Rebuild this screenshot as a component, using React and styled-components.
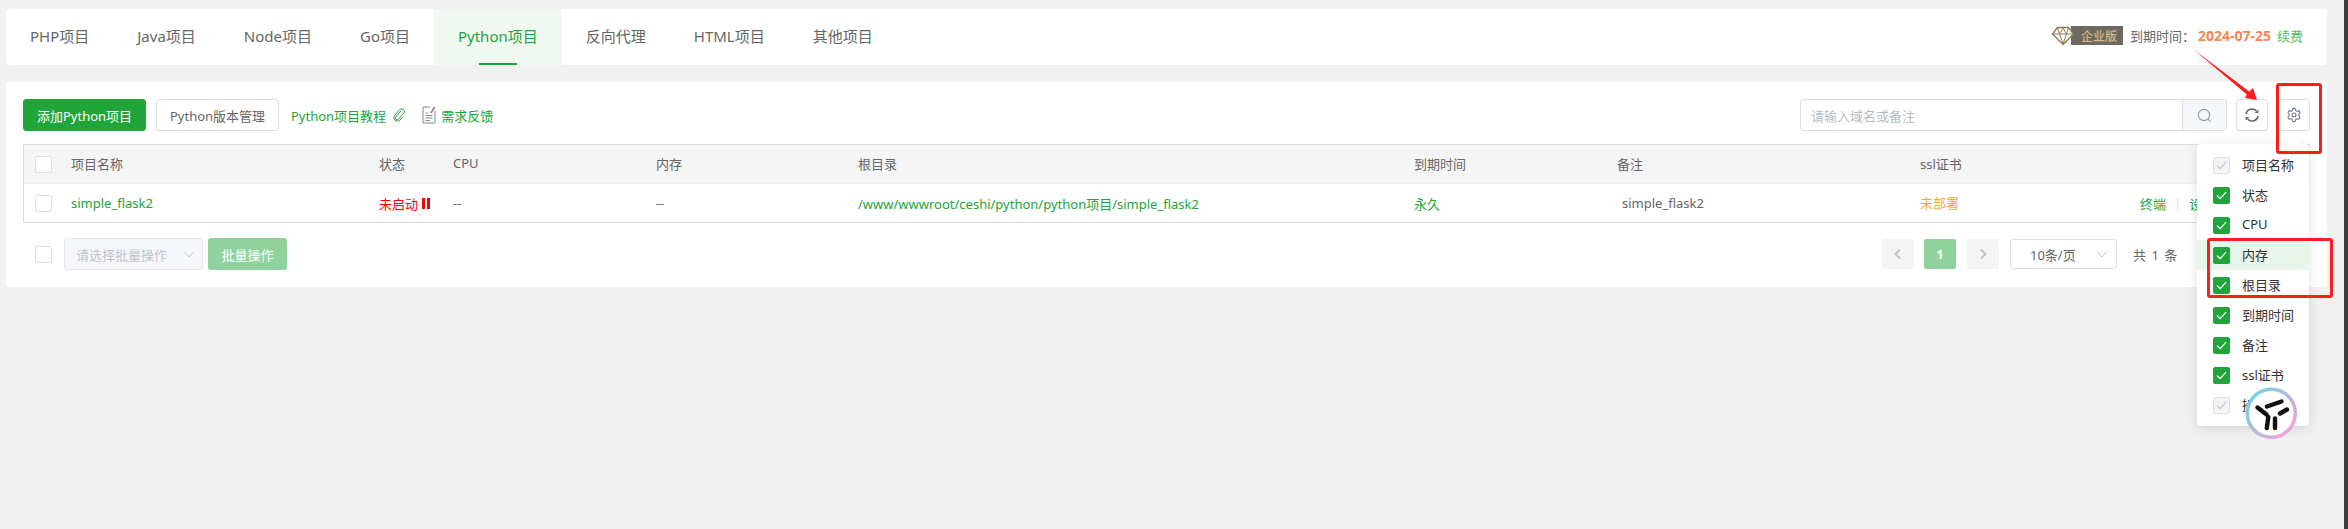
import React from 'react';
import styled, { createGlobalStyle } from 'styled-components';
import { Settings } from 'lucide-react';

const Global = createGlobalStyle`
  html, body { margin: 0; padding: 0; background: #f1f1f1; }
  body { font-family: "Noto Sans", "Noto Sans CJK SC", sans-serif; font-size: 13px; color: #666; overflow: hidden; }
  * { box-sizing: border-box; }
`;

const GREEN = '#20a53a';

const Page = styled.div`
  position: relative; display: flex; width: 2348px; height: 529px; overflow: hidden; background: #f1f1f1;
`;
const Content = styled.main`
  flex: 1; min-width: 0; display: flex; flex-direction: column; gap: 17px; padding: 9px 17px 0 6px;
`;
const Strip = styled.div`
  width: 4px; background: #3c3c3c;
`;
const TabsCard = styled.nav`
  display: flex; align-items: stretch; height: 56px; background: #fff; border-radius: 4px; padding-right: 24px;
`;
const Tab = styled.div`
  position: relative; display: flex; align-items: center; padding: 0 24px 4px; font-size: 15px;
  color: ${p => (p.$active ? GREEN : '#666')};
  background: ${p => (p.$active ? '#f0f8f2' : 'transparent')};
  ${p => p.$active && `&::after { content: ''; position: absolute; left: 45px; width: 38px; bottom: 0; height: 2px; background: ${GREEN}; }`}
`;
const Spacer = styled.div`flex: 1;`;
const VipInfo = styled.div`
  display: flex; align-items: center; font-size: 13px; color: #666; padding-bottom: 3px;
`;
const Badge = styled.span`
  display: flex; align-items: center; justify-content: center; height: 19px; width: 52px; margin-left: -4px; padding-left: 4px;
  background: #6c6963; color: #d6b57e; font-size: 12px; font-weight: 500;
`;
const Expire = styled.span`margin-left: 7px; width: 68px; white-space: nowrap;`;
const DateText = styled.span`color: #fc8453; font-weight: 700; font-size: 14px;`;
const Renew = styled.span`color: #52bd65; margin-left: 6px; font-size: 13px;`;

const MainCard = styled.section`
  height: 205px; background: #fff; border-radius: 2px; padding: 17px 17px 0 17px; display: flex; flex-direction: column;
`;
const Toolbar = styled.div`
  display: flex; align-items: center; height: 32px;
`;
const Btn = styled.button`
  height: 32px; width: ${p => p.$w}px; padding: 0; font: inherit; font-size: 13px; border-radius: 3px; white-space: nowrap; cursor: pointer;
  border: 1px solid ${p => (p.$primary ? GREEN : '#dcdfe6')};
  background: ${p => (p.$primary ? GREEN : '#fff')};
  color: ${p => (p.$primary ? '#fff' : '#666')};
  margin-right: ${p => p.$mr || 0}px;
`;
const Link = styled.span`
  display: inline-flex; align-items: center; color: ${GREEN}; white-space: nowrap; gap: ${p => p.$gap || 0}px; margin-right: ${p => p.$mr || 0}px;
`;
const Search = styled.div`
  display: flex; width: 427px; height: 32px; border: 1px solid #dcdfe6; border-radius: 3px; overflow: hidden; margin-right: 9px;
`;
const SearchInput = styled.div`
  flex: 1; display: flex; align-items: center; padding-left: 10px; color: #b8bcc4; font-size: 13px;
`;
const SearchAddon = styled.div`
  width: 44px; display: flex; align-items: center; justify-content: center; background: #f5f7fa; border-left: 1px solid #dcdfe6;
`;
const IconBtn = styled.div`
  width: 32px; height: 32px; display: flex; align-items: center; justify-content: center;
  border: 1px solid #dcdfe6; border-radius: 3px; background: #fff; margin-left: ${p => p.$ml || 0}px;
`;
const Table = styled.div`
  margin-top: 13px; border: 1px solid #dcdcdc; border-width: 1px 0 1px 1px; height: 79px;
`;
const columns = '47px 308px 74px 203px 202px 556px 203px 303px 220px 1fr';
const HeadRow = styled.div`
  display: grid; grid-template-columns: ${columns}; align-items: center; height: 39px; background: #f5f5f6; border-bottom: 1px solid #eceef3; color: #666;
`;
const BodyRow = styled.div`
  display: grid; grid-template-columns: ${columns}; align-items: center; height: 38px;
`;
const Cell = styled.div`
  white-space: nowrap; color: ${p => p.$color || '#666'}; padding-left: ${p => p.$pl || 0}px; padding-bottom: ${p => p.$pb || 0}px;
  display: flex; align-items: center;
`;
const CheckCell = styled.div`padding-left: 11px; display: flex;`;
const Box = styled.span`
  width: 17px; height: 17px; border-radius: 2px; display: inline-flex; align-items: center; justify-content: center; flex: none;
  border: 1px solid ${p => (p.$on ? GREEN : '#dcdfe6')};
  background: ${p => (p.$on ? GREEN : p.$dis ? '#f2f3f8' : '#fff')};
`;
const Pause = styled.span`
  display: inline-flex; gap: 2px; margin-left: 4px;
  i { display: block; width: 3px; height: 11px; background: #f00; }
`;
const Sep = styled.span`color: #ddd; margin: 0 8px;`;
const Actions = styled.span`display: flex; align-items: center; color: ${GREEN};`;

const Footer = styled.div`
  margin-top: 15px; display: flex; align-items: center; height: 32px;
`;
const FootCheck = styled.div`padding-left: 12px; width: 41px; display: flex;`;
const BatchSelect = styled.div`
  width: 139px; height: 32px; display: flex; align-items: center; justify-content: space-between; padding: 0 7px 0 11px;
  border: 1px solid #e4e7ed; border-radius: 3px; background: #f5f7fa; color: #c0c4cc; white-space: nowrap;
`;
const BatchBtn = styled.div`
  margin-left: 5px; width: 79px; height: 32px; display: flex; align-items: center; justify-content: center;
  background: #90d29d; color: #fff; border-radius: 3px;
`;
const Pager = styled.div`
  display: flex; align-items: center; margin-left: auto; height: 30px;
`;
const PageBtn = styled.div`
  width: 32px; height: 30px; display: flex; align-items: center; justify-content: center; border-radius: 2px; margin-right: ${p => p.$mr || 0}px;
  background: ${p => (p.$active ? '#90d29d' : '#f4f4f5')}; color: #fff; font-weight: 700;
`;
const SizeSelect = styled.div`
  width: 107px; height: 30px; display: flex; align-items: center; justify-content: space-between; padding: 0 8px 0 19px;
  border: 1px solid #dcdfe6; border-radius: 3px; color: #666; margin-right: 16px; white-space: nowrap;
`;
const Total = styled.span`width: 177px; white-space: nowrap; word-spacing: 2px; color: #666;`;

const Popover = styled.div`
  position: absolute; left: 2197px; top: 144px; width: 112px; height: 282px; padding: 6px 0; background: #fff; border-radius: 4px;
  box-shadow: 0 2px 12px rgba(0,0,0,.12);
  &::before {
    content: ''; position: absolute; right: 11px; top: -5px; width: 10px; height: 10px; background: #fff; transform: rotate(45deg);
  }
`;
const PopRow = styled.div`
  position: relative; height: 30px; display: flex; align-items: center; gap: 12px; padding-left: 16px; color: #333; font-size: 13px;
  background: ${p => (p.$hover ? '#e8f5ea' : 'transparent')};
`;
const PopLabel = styled.span`padding-bottom: 2px;`;
const MarkBox = styled.div`
  position: absolute; left: ${p => p.$x}px; top: ${p => p.$y}px; width: ${p => p.$w}px; height: ${p => p.$h}px;
  border: 3px solid #fb1e1e; border-radius: 3px; pointer-events: none;
`;
const Overlay = styled.svg`
  position: absolute; left: ${p => p.$x}px; top: ${p => p.$y}px; pointer-events: none; overflow: visible;
`;

const Tick = ({ color = '#fff' }) => (
  <svg width="11" height="9" viewBox="0 0 11 9"><path d="M1 4.5 L4.2 7.6 L10 1.2" fill="none" stroke={color} strokeWidth="1.2" /></svg>
);
const Chevron = ({ dir = 'down', color = '#c0c4cc', size = 12 }) => {
  const d = dir === 'down' ? 'M1.5 4 L6 9 L10.5 4' : dir === 'left' ? 'M8 1.5 L3.5 6 L8 10.5' : 'M4 1.5 L8.5 6 L4 10.5';
  return <svg width={size} height={size} viewBox="0 0 12 12"><path d={d} fill="none" stroke={color} strokeWidth={dir === 'down' ? 1 : 2} /></svg>;
};
const Diamond = () => (
  <svg width="24" height="20" viewBox="0 0 24 20" fill="none" stroke="#8f7a55" strokeWidth="1.4" style={{ position: 'relative', zIndex: 1 }}>
    <path d="M6.5 1.5 H17.5 L22.5 8 L12 18.5 L1.5 8 Z" fill="#fff" />
    <path d="M2 8 H22 M6.5 2 L8.5 8 L12 18 L15.5 8 L17.5 2 M8.5 8 L12 2 L15.5 8" strokeWidth="1" />
  </svg>
);
const LinkIcon = () => (
  <svg width="14" height="16" viewBox="0 0 14 16" fill="none" stroke={GREEN} strokeWidth="1">
    <path d="M9 4 L3.6 10 a1.8 1.8 0 0 0 2.6 2.4 L12 6 a2.7 2.7 0 0 0 -3.9 -3.6 L2.4 8.6 a3.6 3.6 0 0 0 5.2 4.8 L10.5 10" />
  </svg>
);
const DocIcon = () => (
  <svg width="14" height="20" viewBox="0 0 14 20" fill="none" stroke="#888" strokeWidth="1">
    <path d="M8 2 H1 V18 H13 V6" />
    <path d="M3.5 10.5 H10.5 M3.5 13 H10.5 M3.5 15.5 H8 M3.5 8 H6" />
    <path d="M8 8 L12 1.5 L13.5 2.5 L9.5 8.5 Z" fill="#888" stroke="none" />
  </svg>
);
const SearchIcon = () => (
  <svg width="15" height="15" viewBox="0 0 15 15" fill="none" stroke="#97a3b4" strokeWidth="1.2">
    <circle cx="7" cy="7" r="5.6" /><path d="M11 11 L13.6 13.6" />
  </svg>
);
const RefreshIcon = () => (
  <svg width="16" height="16" viewBox="0 0 16 16" fill="none" stroke="#666" strokeWidth="1.6">
    <path d="M2 7 A6 6 0 0 1 12.4 4" />
    <path d="M14 9 A6 6 0 0 1 3.6 12" />
    <path d="M14.4 2.4 V6 H10.8 Z M1.6 13.6 V10 H5.2 Z" fill="#666" stroke="none" />
  </svg>
);

const tabs = ['PHP项目', 'Java项目', 'Node项目', 'Go项目', 'Python项目', '反向代理', 'HTML项目', '其他项目'];
const headers = ['项目名称', '状态', 'CPU', '内存', '根目录', '到期时间', '备注', 'ssl证书', ''];
const popItems = [
  ['项目名称', 'dis'], ['状态', 'on'], ['CPU', 'on'], ['内存', 'on', true], ['根目录', 'on'],
  ['到期时间', 'on'], ['备注', 'on'], ['ssl证书', 'on'], ['操作', 'dis'],
];

export default function App() {
  return (
    <Page>
      <Global />
      <Content>
        <TabsCard>
          {tabs.map(t => <Tab key={t} $active={t === 'Python项目'}>{t}</Tab>)}
          <Spacer />
          <VipInfo>
            <Diamond />
            <Badge>企业版</Badge>
            <Expire>到期时间：</Expire>
            <DateText>2024-07-25</DateText>
            <Renew>续费</Renew>
          </VipInfo>
        </TabsCard>
        <MainCard>
          <Toolbar>
            <Btn $primary $w={123} $mr={10}>添加Python项目</Btn>
            <Btn $w={123} $mr={12}>Python版本管理</Btn>
            <Link $gap={6} $mr={16}>Python项目教程<LinkIcon /></Link>
            <Link $gap={5}><DocIcon />需求反馈</Link>
            <Spacer />
            <Search>
              <SearchInput>请输入域名或备注</SearchInput>
              <SearchAddon><SearchIcon /></SearchAddon>
            </Search>
            <IconBtn><RefreshIcon /></IconBtn>
            <IconBtn $ml={10}><Settings size={16} strokeWidth={1.6} color="#66748a" /></IconBtn>
          </Toolbar>
          <Table>
            <HeadRow>
              <CheckCell><Box /></CheckCell>
              {headers.map(h => <Cell key={h} $pb={2}>{h}</Cell>)}
            </HeadRow>
            <BodyRow>
              <CheckCell><Box /></CheckCell>
              <Cell $color={GREEN}>simple_flask2</Cell>
              <Cell $color="#f00">未启动<Pause><i /><i /></Pause></Cell>
              <Cell>--</Cell>
              <Cell>--</Cell>
              <Cell $color={GREEN}>/www/wwwroot/ceshi/python/python项目/simple_flask2</Cell>
              <Cell $color={GREEN}>永久</Cell>
              <Cell $pl={5}>simple_flask2</Cell>
              <Cell $color="#f8a93a" $pb={2}>未部署</Cell>
              <Cell><Actions>终端<Sep>|</Sep>设置</Actions></Cell>
            </BodyRow>
          </Table>
          <Footer>
            <FootCheck><Box /></FootCheck>
            <BatchSelect>请选择批量操作<Chevron /></BatchSelect>
            <BatchBtn>批量操作</BatchBtn>
            <Pager>
              <PageBtn $mr={10}><Chevron dir="left" /></PageBtn>
              <PageBtn $active $mr={11}>1</PageBtn>
              <PageBtn $mr={11}><Chevron dir="right" /></PageBtn>
              <SizeSelect>10条/页<Chevron /></SizeSelect>
              <Total>共 1 条</Total>
            </Pager>
          </Footer>
        </MainCard>
      </Content>
      <Strip />
      <Popover>
        {popItems.map(([label, state, hover]) => (
          <PopRow key={label} $hover={hover}>
            <Box $on={state === 'on'} $dis={state === 'dis'}>
              <Tick color={state === 'on' ? '#fff' : '#c8c8c8'} />
            </Box>
            <PopLabel>{label}</PopLabel>
          </PopRow>
        ))}
      </Popover>
      <MarkBox $x={2276} $y={83} $w={46} $h={71} />
      <MarkBox $x={2207} $y={238} $w={126} $h={60} />
      <Overlay $x={2190} $y={46} width="75" height="60" viewBox="0 0 75 60">
        <path d="M3 3 L59.2 45.4 L63 42 L67 54 L55 52 L56.8 48.6 Z" fill="#fb1e1e" />
      </Overlay>
      <Overlay $x={2244} $y={386} width="54" height="54" viewBox="0 0 54 54">
        <defs>
          <linearGradient id="ring" x1="0.1" y1="0.1" x2="0.9" y2="0.9">
            <stop offset="0" stopColor="#74d2e4" />
            <stop offset="1" stopColor="#f0a4d8" />
          </linearGradient>
        </defs>
        <circle cx="27.3" cy="27.3" r="24" fill="#fff" stroke="url(#ring)" strokeWidth="3.6" />
        <path d="M13.5 21.5 L22.5 28.5 M23 20.5 L37.5 15.5 M36 27.5 L43 23.5 M24.3 31 L22.8 42 M31 32.5 V42" stroke="#111" strokeWidth="4.4" strokeLinecap="round" fill="none" />
      </Overlay>
    </Page>
  );
}
